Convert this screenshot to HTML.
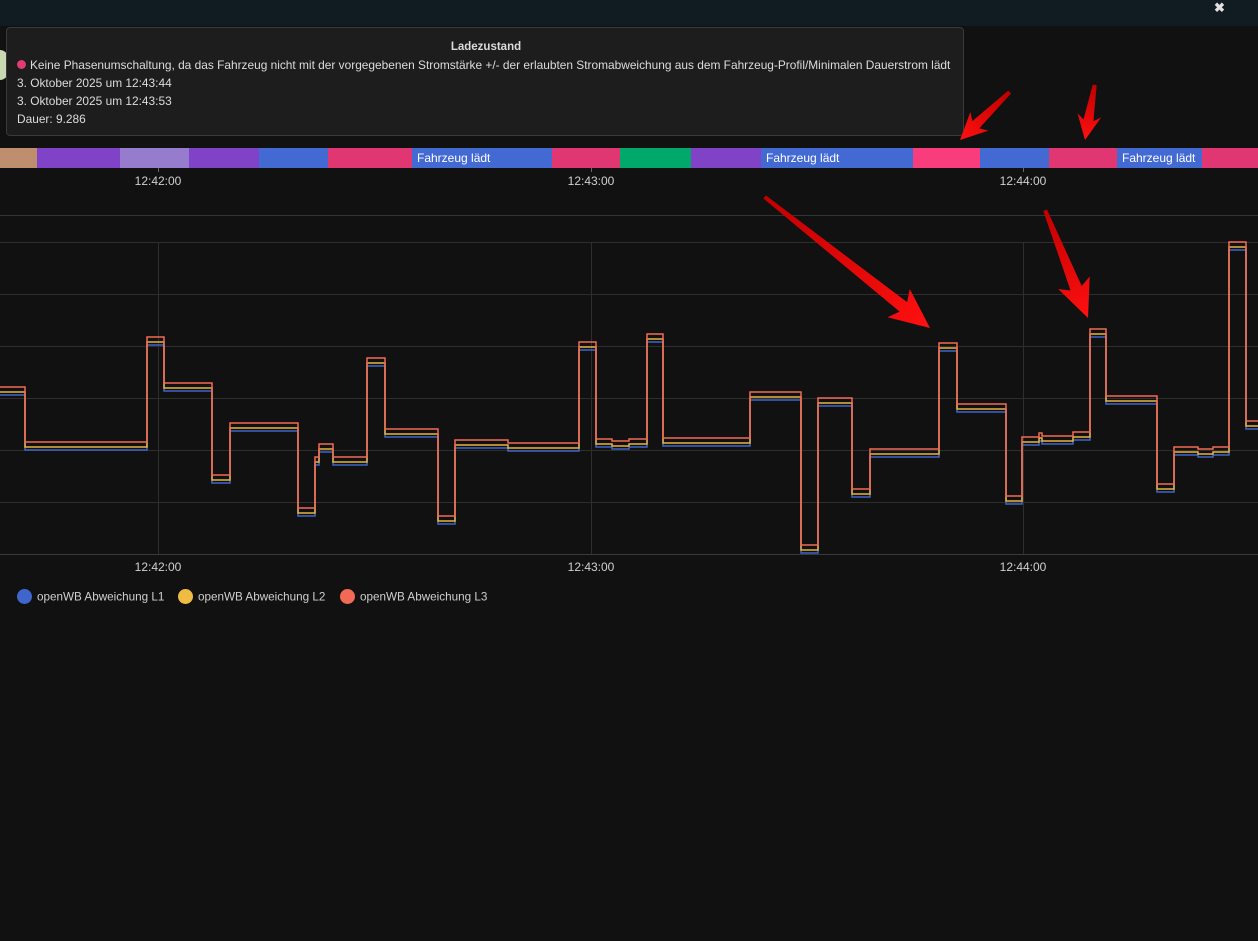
<!DOCTYPE html>
<html><head><meta charset="utf-8"><style>
html,body{margin:0;padding:0;width:1258px;height:941px;overflow:hidden;background:#111111;font-family:"Liberation Sans",sans-serif;}
.hdr{position:absolute;left:0;top:0;width:1258px;height:26px;background:#101c22;}
.tip{position:absolute;left:6px;top:27px;width:958px;height:109px;background:#1d1d1d;border:1px solid #3a3a3a;border-radius:4px;box-sizing:border-box;color:#dcdcdc;font-size:11.9px;}
.tip .t{position:absolute;top:13px;left:0;width:958px;text-align:center;font-weight:bold;font-size:11.5px;}
.tip .l{position:absolute;left:10px;white-space:nowrap;}
.seg{position:absolute;top:148px;height:20px;color:#fff;font-size:12px;line-height:20px;box-sizing:border-box;padding-left:5px;}
.tl{position:absolute;color:#d0d0d0;font-size:12px;width:80px;text-align:center;}
.lg{position:absolute;top:590px;color:#cfcfcf;font-size:11.7px;}
.lg span{display:inline-block;width:15px;height:15px;border-radius:50%;vertical-align:middle;margin-right:5px;position:relative;top:-1px;}
</style></head><body>
<div class="hdr"></div>
<div style="position:absolute;left:1214px;top:0;color:#e0e0e0;font-size:13px;font-weight:bold">&#x2716;</div>
<div style="position:absolute;left:0;top:50px;width:8px;height:30px;border-radius:0 15px 15px 0;background:#c8d8b0"></div>

<div class="tip">
<div class="t">Ladezustand</div>
<div class="l" style="top:30px"><span style="display:inline-block;width:9px;height:9px;border-radius:50%;background:#e23a75;margin-right:4px"></span>Keine Phasenumschaltung, da das Fahrzeug nicht mit der vorgegebenen Stromstärke +/- der erlaubten Stromabweichung aus dem Fahrzeug-Profil/Minimalen Dauerstrom lädt</div>
<div class="l" style="top:48px">3. Oktober 2025 um 12:43:44</div>
<div class="l" style="top:66px">3. Oktober 2025 um 12:43:53</div>
<div class="l" style="top:84px">Dauer: 9.286</div>
</div>

<div class="seg" style="left:0;width:37px;background:#bf8e6e"></div>
<div class="seg" style="left:37px;width:83px;background:#8043c8"></div>
<div class="seg" style="left:120px;width:69px;background:#957ccc"></div>
<div class="seg" style="left:189px;width:70px;background:#8043c8"></div>
<div class="seg" style="left:259px;width:69px;background:#436ad2"></div>
<div class="seg" style="left:328px;width:84px;background:#e03672"></div>
<div class="seg" style="left:412px;width:140px;background:#436ad2">Fahrzeug lädt</div>
<div class="seg" style="left:552px;width:68px;background:#e03672"></div>
<div class="seg" style="left:620px;width:71px;background:#00a86b"></div>
<div class="seg" style="left:691px;width:70px;background:#8043c8"></div>
<div class="seg" style="left:761px;width:152px;background:#436ad2">Fahrzeug lädt</div>
<div class="seg" style="left:913px;width:67px;background:#f83c7c"></div>
<div class="seg" style="left:980px;width:69px;background:#436ad2"></div>
<div class="seg" style="left:1049px;width:68px;background:#e03672"></div>
<div class="seg" style="left:1117px;width:85px;background:#436ad2">Fahrzeug lädt</div>
<div class="seg" style="left:1202px;width:56px;background:#e03672"></div>

<div class="tl" style="left:118px;top:174px">12:42:00</div>
<div class="tl" style="left:551px;top:174px">12:43:00</div>
<div class="tl" style="left:983px;top:174px">12:44:00</div>

<svg width="1258" height="941" style="position:absolute;left:0;top:0">
<defs><linearGradient id="g" x1="0" x2="1"><stop offset="0" stop-color="#c00000"/><stop offset="1" stop-color="#ff1010"/></linearGradient></defs>
<g stroke="#3a3a3a" stroke-width="1">
<line x1="0" y1="215.5" x2="1258" y2="215.5" stroke="#333"/>
<line x1="0" y1="242.5" x2="1258" y2="242.5" stroke="#2e2e2e"/>
<line x1="0" y1="294.5" x2="1258" y2="294.5" stroke="#2e2e2e"/>
<line x1="0" y1="346.5" x2="1258" y2="346.5" stroke="#2e2e2e"/>
<line x1="0" y1="398.5" x2="1258" y2="398.5" stroke="#2e2e2e"/>
<line x1="0" y1="450.5" x2="1258" y2="450.5" stroke="#2e2e2e"/>
<line x1="0" y1="502.5" x2="1258" y2="502.5" stroke="#2e2e2e"/>
<line x1="0" y1="554.5" x2="1258" y2="554.5"/>
<line x1="158.5" y1="242" x2="158.5" y2="554" stroke="#2e2e2e"/>
<line x1="591.5" y1="242" x2="591.5" y2="554" stroke="#2e2e2e"/>
<line x1="1023.5" y1="242" x2="1023.5" y2="554" stroke="#2e2e2e"/>
<line x1="158.5" y1="168" x2="158.5" y2="172" stroke="#666"/>
<line x1="591.5" y1="168" x2="591.5" y2="172" stroke="#666"/>
<line x1="1023.5" y1="168" x2="1023.5" y2="172" stroke="#666"/>
</g>
<defs>
<polyline id="p" fill="none" stroke-width="1.5" points="0,387 25,387 25,442 147,442 147,337 164,337 164,383 212,383 212,475 230,475 230,423 298,423 298,508 315,508 315,457 319,457 319,444 333,444 333,457 367,457 367,358 385,358 385,429 438,429 438,516 455,516 455,440 508,440 508,443 579,443 579,342 596,342 596,439 612,439 612,441 629,441 629,439 647,439 647,334 663,334 663,438 750,438 750,392 801,392 801,545 818,545 818,398 852,398 852,489 870,489 870,449 939,449 939,343 957,343 957,404 1006,404 1006,496 1022,496 1022,437 1039,437 1039,433 1042,433 1042,436 1073,436 1073,432 1090,432 1090,329 1106,329 1106,396 1157,396 1157,484 1174,484 1174,447 1198,447 1198,449 1213,449 1213,447 1229,447 1229,242 1246,242 1246,421 1260,421"/>
</defs>
<use href="#p" stroke="#3f66cc" transform="translate(0,8)"/>
<use href="#p" stroke="#e8b441" transform="translate(0,5)"/>
<use href="#p" stroke="#f26a55"/>

<g fill="url(#g)">
<polygon transform="translate(930,328) rotate(38.4)" points="-211,-2 -34,-6 -40,-18 0,0 -40,18 -34,6 -211,2"/>
<polygon transform="translate(1088,318) rotate(68.3)" points="-116,-2 -32,-6 -38,-17 0,0 -38,17 -32,6 -116,2"/>
<polygon transform="translate(960,140) rotate(136)" points="-69,-2 -22,-5 -27,-13 0,0 -27,13 -22,5 -69,2"/>
<polygon transform="translate(1085,140) rotate(100)" points="-56,-2 -20,-5 -25,-12 0,0 -25,12 -20,5 -56,2"/>
</g>
</svg>

<div class="tl" style="left:118px;top:560px">12:42:00</div>
<div class="tl" style="left:551px;top:560px">12:43:00</div>
<div class="tl" style="left:983px;top:560px">12:44:00</div>

<div class="lg" style="left:17px"><span style="background:#3f66cc"></span>openWB Abweichung L1</div>
<div class="lg" style="left:178px"><span style="background:#f0bb45"></span>openWB Abweichung L2</div>
<div class="lg" style="left:340px"><span style="background:#f26a55"></span>openWB Abweichung L3</div>
</body></html>
